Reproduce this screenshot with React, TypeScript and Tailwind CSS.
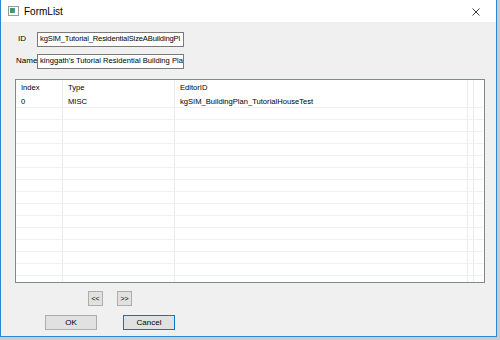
const rows = Array.from({ length: 15 });

const Cell = ({ w, children, last }: { w: string; children?: React.ReactNode; last?: boolean }) => (
  <div className={`${w} shrink-0 h-full ${last ? '' : 'border-r border-[#ececec]'} pl-[5px] flex items-center overflow-hidden whitespace-nowrap`}>
    {children}
  </div>
);

const Row = ({ cells, header }: { cells: string[]; header?: boolean }) => (
  <div className={`flex ${header ? 'h-[16px]' : 'h-[12px] border-b border-[#f0f0f0]'}`}>
    <Cell w="w-[47px]">{cells[0]}</Cell>
    <Cell w="w-[112px]">{cells[1]}</Cell>
    <Cell w="w-[293px]">{cells[2]}</Cell>
    <Cell w="w-[3px]" />
    <div className="flex-1" />
  </div>
);

export default function App() {
  return (
    <div
      className="w-[500px] h-[340px] bg-[#c9ccd0] overflow-hidden text-black"
      style={{ fontFamily: '"Liberation Sans", Arial, sans-serif' }}
    >
      <div className="w-[497px] h-[337px] flex flex-col border-l border-r border-b border-[#2b88d8] bg-white">
        {/* title bar */}
        <div className="h-[22px] flex items-center pl-[7px] pr-[16px] bg-white">
          <svg width="11" height="10" viewBox="0 0 11 10" className="mr-[5px]">
            <rect x="0.5" y="0.5" width="10" height="9" fill="#fff" stroke="#9a9a9a" />
            <rect x="2" y="2" width="3" height="5" fill="#3c9b5a" />
            <rect x="5" y="2" width="2" height="5" fill="#4a8fc9" />
          </svg>
          <span className="text-[10px] mt-[1px]">FormList</span>
          <svg width="8" height="8" viewBox="0 0 8 8" className="ml-auto mt-[2px]">
            <path d="M0.5 0.5 L7.5 7.5 M7.5 0.5 L0.5 7.5" stroke="#222" strokeWidth="0.9" />
          </svg>
        </div>

        {/* body */}
        <div className="flex-1 bg-[#f0f0f0] pl-[14px] pt-[9px] text-[7.6px]">
          <div className="flex items-center h-[16px]">
            <span className="w-[22px] pl-[3px] text-[8px]">ID</span>
            <div className="w-[147px] h-[15px] bg-white border border-[#7a7a7a] pl-[2px] flex items-center whitespace-nowrap overflow-hidden">
              <span className="tracking-[-0.15px]">kgSIM_Tutorial_ResidentialSizeABuildingPl</span>
            </div>
          </div>
          <div className="flex items-center h-[16px] mt-[6px]">
            <span className="w-[22px] pl-[1px] text-[8px]">Name</span>
            <div className="w-[147px] h-[15px] bg-white border border-[#7a7a7a] pl-[2px] flex items-center whitespace-nowrap overflow-hidden">
              <span>kinggath's Tutorial Residential Building Pla</span>
            </div>
          </div>

          {/* list */}
          <div className="mt-[10px] w-[470px] h-[204px] bg-white border border-[#828790] overflow-hidden">
            <Row header cells={['Index', 'Type', 'EditorID']} />
            <Row cells={['0', 'MISC', 'kgSIM_BuildingPlan_TutorialHouseTest']} />
            {rows.map((_, i) => (
              <Row key={i} cells={['', '', '']} />
            ))}
          </div>

          <div className="flex mt-[8px] pl-[73px] gap-[14px]">
            <button className="w-[15px] h-[15px] bg-[#e1e1e1] border border-[#adadad] text-[7px] leading-none flex items-center justify-center">
              &lt;&lt;
            </button>
            <button className="w-[15px] h-[15px] bg-[#e1e1e1] border border-[#adadad] text-[7px] leading-none flex items-center justify-center">
              &gt;&gt;
            </button>
          </div>

          <div className="flex mt-[9px] pl-[30px] gap-[26px]">
            <button className="w-[52px] h-[15px] bg-[#e1e1e1] border border-[#adadad] text-[8px] leading-none flex items-center justify-center">
              OK
            </button>
            <button className="w-[52px] h-[15px] bg-[#e1e1e1] border border-[#0078d7] text-[8px] leading-none flex items-center justify-center">
              Cancel
            </button>
          </div>
        </div>
      </div>
    </div>
  );
}
